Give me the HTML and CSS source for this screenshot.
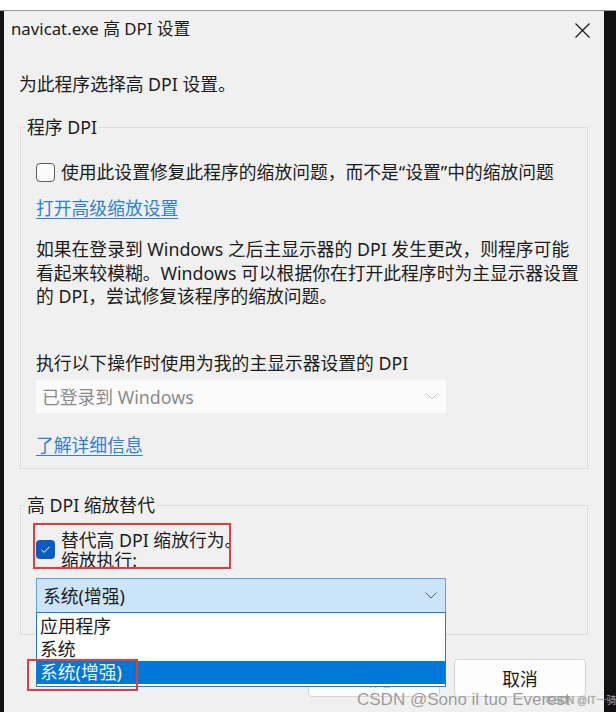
FILE: index.html
```html
<!DOCTYPE html>
<html lang="zh-CN">
<head>
<meta charset="utf-8">
<title>navicat.exe 高 DPI 设置</title>
<link rel="stylesheet" href="styles.css">
</head>
<body>
<div class="screen">
  <div class="strip strip-left"></div>
  <div class="window">
    <div class="titlebar">
      <span class="title">navicat.exe 高 DPI 设置</span>
      <svg class="close" width="15" height="15" viewBox="0 0 15 15"><path d="M0.5 0.5 L14.5 14.5 M14.5 0.5 L0.5 14.5" stroke="#1a1a1a" stroke-width="1.2" fill="none"/></svg>
    </div>
    <div class="intro">为此程序选择高 DPI 设置。</div>

    <div class="group group-one">
      <div class="group-title">程序 DPI</div>
      <div class="check-row">
        <span class="checkbox"></span>
        <span>使用此设置修复此程序的缩放问题，而不是“设置”中的缩放问题</span>
      </div>
      <div class="link link-advanced">打开高级缩放设置</div>
      <p class="para">如果在登录到 Windows 之后主显示器的 DPI 发生更改，则程序可能<br>看起来较模糊。Windows 可以根据你在打开此程序时为主显示器设置<br>的 DPI，尝试修复该程序的缩放问题。</p>
      <div class="label-when">执行以下操作时使用为我的主显示器设置的 DPI</div>
      <div class="select select-disabled">
        <span>已登录到 Windows</span>
        <svg class="chev" width="12" height="7" viewBox="0 0 12 7"><path d="M0.5 0.5 L6 6 L11.5 0.5" stroke="#c4c4c4" stroke-width="1" fill="none"/></svg>
      </div>
      <div class="link link-more">了解详细信息</div>
    </div>

    <div class="group group-two">
      <div class="group-title">高 DPI 缩放替代</div>
      <div class="check-row check-row-two">
        <span class="checkbox checked"><svg width="19" height="19" viewBox="0 0 19 19"><path d="M5.5 9.8 L8.2 12.4 L13.5 6.8" stroke="#ffffff" stroke-width="1" fill="none"/></svg></span>
        <span class="two-lines"><span>替代高 DPI 缩放行为。</span><span>缩放执行:</span></span>
        <span class="mark mark-check"></span>
      </div>
      <div class="select select-active">
        <span>系统(增强)</span>
        <svg class="chev" width="12" height="7" viewBox="0 0 12 7"><path d="M0.5 0.5 L6 6 L11.5 0.5" stroke="#5a5a5a" stroke-width="1" fill="none"/></svg>
        <div class="droplist">
          <div class="opt">应用程序</div>
          <div class="opt">系统</div>
          <div class="opt opt-selected">系统(增强)</div>
          <span class="mark mark-option"></span>
        </div>
      </div>
    </div>

    <div class="buttons">
      <div class="btn">确定</div>
      <div class="btn">取消</div>
    </div>
  </div>
  <div class="strip strip-right"></div>
  <div class="watermark">CSDN @Sono il tuo Everest</div>
  <div class="watermark-small">CSDN @IT一骑</div>
</div>
</body>
</html>
```

FILE: styles.css
```css
* { box-sizing: border-box; }

html, body {
  margin: 0;
  padding: 0;
  background: #ffffff;
  overflow: hidden;
}

body {
  width: 616px;
  height: 712px;
  font-family: "Noto Sans", "Noto Sans CJK SC", sans-serif;
  color: #1b1b1b;
}

.screen {
  position: relative;
  margin-top: 10px;
  height: 702px;
  display: flex;
  border-top: 1px solid #9a9a9a;
}

.strip {
  background: #121212;
  flex: none;
}

.strip-left { width: 4px; }
.strip-right { width: 12px; }

.window {
  width: 600px;
  flex: none;
  background: #f0f0f0;
  display: flex;
  flex-direction: column;
}

.titlebar {
  height: 39px;
  flex: none;
  display: flex;
  align-items: center;
  justify-content: space-between;
  padding: 0 14px 3px 7px;
  background: #f1f1f1;
}

.title {
  font-size: 16.8px;
  line-height: 20px;
  color: #1b1b1b;
}

.close { display: block; margin-top: 2px; }

.intro {
  margin: 22px 0 0 15px;
  font-size: 17.8px;
  line-height: 24px;
}

.group {
  margin: 0 16px;
  border: 1px solid #dcdcdc;
  padding: 0 15px;
  font-size: 17.8px;
}

.group-one {
  margin-top: 31px;
  padding-bottom: 11px;
}

.group-two {
  margin-top: 36px;
  padding-bottom: 21px;
}

.group-title {
  width: fit-content;
  margin: -12px 0 0 -11px;
  padding: 0 2px;
  line-height: 22px;
  background: #f0f0f0;
}

.check-row {
  margin-top: 22px;
  display: flex;
  align-items: center;
  gap: 6px;
  line-height: 24px;
  height: 24px;
  white-space: nowrap;
}

.checkbox {
  width: 19px;
  height: 19px;
  flex: none;
  border: 1px solid #5c5c5c;
  border-radius: 4px;
  background: #fbfbfb;
}

.checkbox.checked {
  border: none;
  background: #0b5cc0;
}

.checkbox svg { display: block; }

.link {
  color: #2f7fd6;
  text-decoration: underline;
  text-underline-offset: 3px;
  text-decoration-thickness: 1px;
  line-height: 24px;
  width: fit-content;
}

.link-advanced { margin-top: 12px; }

.para {
  margin: 18px -14px 0 0;
  line-height: 23.5px;
  white-space: nowrap;
}

.label-when {
  margin-top: 42px;
  line-height: 24px;
}

.select {
  position: relative;
  width: 410px;
  display: flex;
  align-items: center;
  justify-content: space-between;
  padding: 0 8px 0 6px;
}

.select-disabled {
  margin-top: 5px;
  height: 33px;
  background: #fbfbfb;
  color: #8a8a8a;
}

.chev { display: block; }

.link-more { margin-top: 20px; }

.check-row-two {
  position: relative;
  margin-top: 14px;
  height: 40px;
  line-height: 20px;
}

.two-lines {
  display: flex;
  flex-direction: column;
}

.mark {
  position: absolute;
  border: 2px solid #e8393c;
  pointer-events: none;
}

.mark-check {
  left: -3px;
  top: -7px;
  width: 198px;
  height: 46px;
}

.select-active {
  margin-top: 8px;
  height: 35px;
  background: #cce4f7;
  border: 1px solid #5ea0e2;
  color: #1b1b1b;
}

.droplist {
  position: absolute;
  left: -1px;
  top: 33px;
  width: 410px;
  height: 75px;
  background: #ffffff;
  border: 1px solid #1a7fd8;
  padding-top: 2px;
  z-index: 2;
}

.opt {
  height: 23px;
  line-height: 23px;
  padding-left: 3px;
  color: #1b1b1b;
}

.opt-selected {
  background: #0078d7;
  color: #eef5fc;
}

.mark-option {
  left: -10px;
  top: 46px;
  width: 111px;
  height: 32px;
}

.buttons {
  margin: 24px 18px 0 0;
  display: flex;
  justify-content: flex-end;
  gap: 14px;
}

.btn {
  width: 132px;
  height: 38px;
  border: 1px solid #d4d4d4;
  border-radius: 4px;
  background: #fdfdfd;
  display: flex;
  align-items: center;
  justify-content: center;
  font-size: 17.8px;
}

.watermark {
  position: absolute;
  left: 357px;
  top: 679px;
  font-family: "Liberation Sans", sans-serif;
  font-size: 17px;
  line-height: 20px;
  color: rgba(120, 120, 120, 0.75);
  text-shadow: 0 0 1px rgba(255, 255, 255, 0.8);
  white-space: nowrap;
  z-index: 3;
}

.watermark-small {
  position: absolute;
  left: 546px;
  top: 683px;
  font-family: "Liberation Sans", "Noto Sans CJK SC", sans-serif;
  font-size: 10px;
  line-height: 13px;
  color: rgba(170, 170, 170, 0.9);
  text-shadow: 0 0 1px rgba(90, 90, 90, 0.6);
  white-space: nowrap;
  z-index: 4;
}
```
